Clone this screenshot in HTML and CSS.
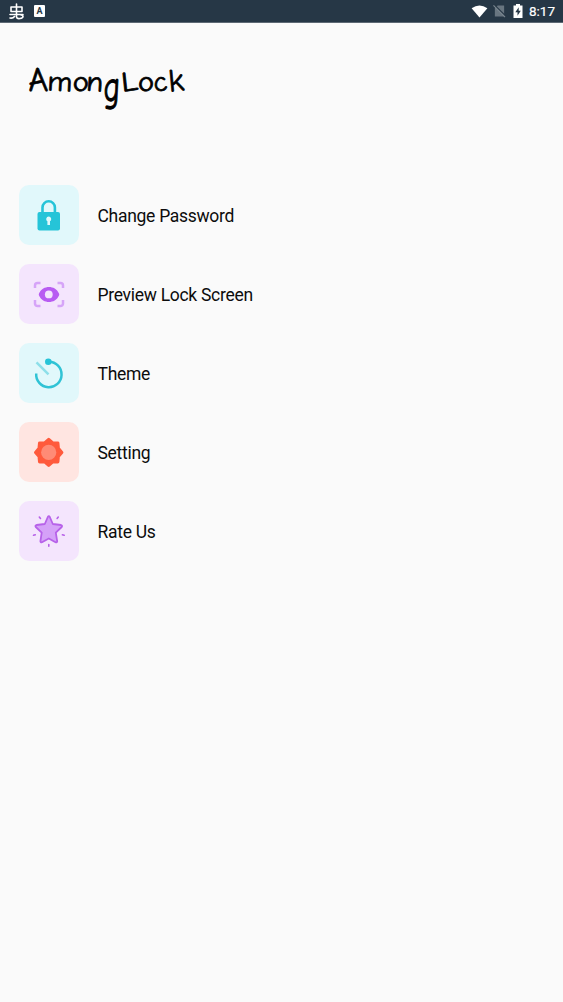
FILE: index.html
```html
<!DOCTYPE html>
<html lang="en">
<head>
<meta charset="utf-8">
<title>AmongLock</title>
<link rel="stylesheet" href="styles.css">
</head>
<body>
<header class="status-bar">
  <svg class="bug" viewBox="0 0 17 17"><path d="M3 4h11v4.500H3zM8.500 1v11M2 11.500h13M8.500 11.500v2.500q.5 2 3.500 1.500t3-2q0-1.500-2-1.500M2 15q3 .5 4.500-1.500"/></svg>
  <span class="badge">A</span>
  <span class="spacer"></span>
  <svg class="wifi" viewBox="0 0 18 14"><path d="M0.500 3.500Q9-2.500 17.500 3.500L9 13.500z"/></svg>
  <svg class="sim" viewBox="0 0 14 14"><path class="sim-body" d="M5 1h7v12H2V4z"/><path class="sim-gap" d="M1 0L14 13"/><path class="sim-slash" d="M0.500 1L13 13.500"/></svg>
  <svg class="battery" viewBox="0 0 10 14"><path class="cell" d="M3 0h4v1.500h2.500V14H.5V1.500H3z"/><path class="bolt" d="M5.700 3.200L2.300 8.300h2.200v3.500l3.300-5.100H5.700z"/></svg>
  <time class="clock">8:17</time>
</header>
<main class="page">
  <h1 class="wordmark"><span class="l-a">A</span><span class="l-m">m</span><span class="l-o">o</span><span class="l-n">n</span><span class="l-g">g</span><span class="l-l">L</span><span class="l-o2">o</span><span class="l-c">c</span><span class="l-k">k</span></h1>
  <nav class="menu">
    <a class="item">
      <svg class="tile cyan" viewBox="0 0 60 60"><path class="shackle" d="M23.500 28v-5.500a6.200 6.200 0 0 1 12.400 0V28"/><rect class="fill-cyan" x="18.500" y="27" width="22.500" height="18.500" rx="2"/><path class="keyhole" d="M29.700 31.500a2.600 2.600 0 0 1 1.300 4.800v3.700h-2.600v-3.700a2.600 2.600 0 0 1 1.300-4.800z"/></svg>
      <span>Change Password</span>
    </a>
    <a class="item">
      <svg class="tile purple" viewBox="0 0 60 60"><path class="corners" d="M16 24v-2.500a2.500 2.500 0 0 1 2.500-2.500H21.500M38.500 19H41.500a2.500 2.500 0 0 1 2.500 2.500V24M44 36v3.500a2.500 2.500 0 0 1-2.500 2.500H38.500M21.500 42H18.500a2.500 2.500 0 0 1-2.500-2.500V36"/><path class="fill-purple" d="M20 29.500C22 25 26 23 30 23s8 2 10 6.500q.5 1 0 2C38 36 34 38 30 38s-8-2-10-6.500q-.5-1 0-2z"/><circle class="pupil" cx="29.800" cy="30.400" r="3.900"/></svg>
      <span>Preview Lock Screen</span>
    </a>
    <a class="item">
      <svg class="tile cyan" viewBox="0 0 60 60"><path class="hand" d="M17.500 19.300L29.500 31.300"/><path class="dial" d="M17.200 30.500A12.700 12.700 0 1 0 30 18.800"/><circle class="fill-cyan" cx="29.300" cy="18.700" r="3.300"/></svg>
      <span>Theme</span>
    </a>
    <a class="item">
      <svg class="tile red" viewBox="0 0 60 60"><path class="gear" d="M29.700 17.500L33.700 21L38.800 21L39.300 26.200L42.800 30.400L39.300 34.500L38.800 39.800L33.700 39.800L29.700 43.300L25.700 39.800L20.600 39.800L20.100 34.500L16.600 30.400L20.100 26.200L20.600 21L25.700 21z"/><circle class="gear-core" cx="29.700" cy="30.400" r="7.600"/></svg>
      <span>Setting</span>
    </a>
    <a class="item">
      <svg class="tile purple" viewBox="0 0 60 60"><path class="star" d="M28.800 16Q29.800 14.500 30.800 16L33.800 23L42 24Q43.700 24.600 42.700 26L36.800 31.700L38.200 40.300Q38 41.800 36.500 41.200L29.800 37.500L23 41.200Q21.500 41.800 21.400 40.300L22.700 31.700L16.800 26Q15.800 24.600 17.500 24L25.800 23z"/><path class="rays" d="M20.300 16l1.200 1.500M39.300 16l-1.200 1.500M14.500 34.300l1.800-.6M45.200 34.300l-1.800-.6M29.800 43.500v1.800"/></svg>
      <span>Rate Us</span>
    </a>
  </nav>
</main>
</body>
</html>
```
FILE: styles.css
```css
* { box-sizing: border-box; }
body {
  margin: 0;
  min-height: 1002px;
  background: #fafafa;
  color: #0c0c0c;
  font-family: Roboto, sans-serif;
}
.status-bar {
  display: flex;
  align-items: center;
  height: 23px;
  padding: 0 8px 0 8px;
  background: #263746;
  border-bottom: 1px solid #5d6974;
  color: #fff;
}
.spacer { flex: 1; }
.bug { width: 17px; height: 17px; fill: none; stroke: #fff; stroke-width: 1.6; stroke-linecap: round; stroke-linejoin: round; }
.badge {
  width: 11px;
  height: 12px;
  margin-left: 9px;
  border-radius: 1px;
  background: #fff;
  color: #263746;
  font-size: 9px;
  font-weight: 700;
  line-height: 12px;
  text-align: center;
}
.wifi { width: 17px; height: 13px; fill: #fff; }
.sim { width: 13px; height: 14px; margin-left: 5px; }
.sim-body { fill: #687580; }
.sim-gap { stroke: #263746; stroke-width: 1.5; }
.sim-slash { stroke: #7b8790; stroke-width: 1.2; }
.battery { width: 10px; height: 14px; margin-left: 7px; }
.cell { fill: #fff; }
.bolt { fill: #263746; }
.clock { width: 26px; margin-left: 6px; font-size: 13.500px; line-height: 22px; white-space: nowrap; -webkit-text-stroke: 0.2px #fff; }

.page { padding: 36px 19px 0; }
.wordmark {
  display: flex;
  align-items: baseline;
  height: 107px;
  margin: 0 0 19px;
  padding-left: 9px;
  color: #000;
  font: 400 28px/42px "Comic Neue", Lato, sans-serif;
  -webkit-text-stroke: 0.7px #000;
}
.wordmark span { display: block; text-align: center; }
.l-a { width: 19px; font-size: 34px; transform: skewX(4deg); }
.l-m { width: 26px; transform: rotate(3deg) scaleX(1.08); }
.l-o { width: 14px; transform: rotate(-12deg) scaleX(1.1); }
.l-n { width: 16px; transform: rotate(4deg) scaleX(1.1); }
.l-g { width: 18px; transform: translateY(5px) scale(1.1, 1.55) skewX(-3deg); }
.l-l { width: 17px; transform: rotate(-6deg) scaleX(1.2); }
.l-o2 { width: 15px; transform: rotate(-12deg) scaleX(1.1); }
.l-c { width: 14px; transform: rotate(-7deg); }
.l-k { width: 18px; font-size: 32px; transform: rotate(-5deg); }

.menu { display: flex; flex-direction: column; gap: 19px; }
.item { display: flex; align-items: center; gap: 18.500px; height: 60px; font-size: 17.500px; line-height: 24px; letter-spacing: -0.290px; }
.item span { padding-top: 2px; }
.tile { width: 60px; height: 60px; border-radius: 10px; fill: none; stroke-linejoin: round; }
.cyan { background: #e1f8fb; }
.purple { background: #f4e5fd; }
.red { background: #ffe5e1; }
.fill-cyan { fill: #26c4d8; }
.shackle { stroke: #26c4d8; stroke-width: 2.6; }
.keyhole { fill: #e1f8fb; }
.corners { stroke: #d6a4f8; stroke-width: 2.5; }
.fill-purple { fill: #b85cf2; }
.pupil { fill: #f4e5fd; }
.hand { stroke: #8ddfe9; stroke-width: 2.4; }
.dial { stroke: #30c3d5; stroke-width: 2.5; }
.gear { fill: #ff5a3c; stroke: #ff5a3c; stroke-width: 3.2; }
.gear-core { fill: #ff8b76; }
.star { fill: #d5a1f8; stroke: #b762e9; stroke-width: 1.8; }
.rays { stroke: #b762e9; stroke-width: 1.6; stroke-linecap: round; }
```
